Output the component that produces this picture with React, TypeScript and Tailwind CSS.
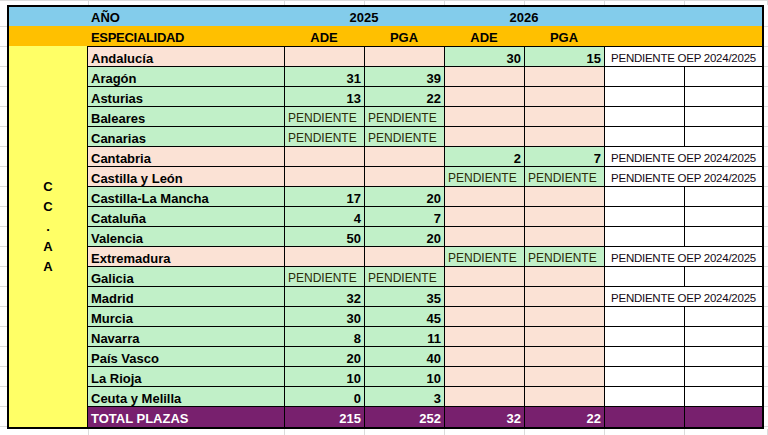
const font = { fontFamily: '"Liberation Sans", Arial, sans-serif' };

type Fill = 'g' | 'p' | 'w';

interface Row {
  name: string;
  nameFill: Fill;
  cells: [Fill, string][]; // ADE25, PGA25, ADE26, PGA26
  oep?: boolean;
}

const G: Fill = 'g';
const P: Fill = 'p';
const PEND = 'PENDIENTE';

const rows: Row[] = [
  { name: 'Andalucía', nameFill: P, cells: [[P, ''], [P, ''], [G, '30'], [G, '15']], oep: true },
  { name: 'Aragón', nameFill: G, cells: [[G, '31'], [G, '39'], [P, ''], [P, '']] },
  { name: 'Asturias', nameFill: G, cells: [[G, '13'], [G, '22'], [P, ''], [P, '']] },
  { name: 'Baleares', nameFill: G, cells: [[G, PEND], [G, PEND], [P, ''], [P, '']] },
  { name: 'Canarias', nameFill: G, cells: [[G, PEND], [G, PEND], [P, ''], [P, '']] },
  { name: 'Cantabria', nameFill: P, cells: [[P, ''], [P, ''], [G, '2'], [G, '7']], oep: true },
  { name: 'Castilla y León', nameFill: P, cells: [[P, ''], [P, ''], [G, PEND], [G, PEND]], oep: true },
  { name: 'Castilla-La Mancha', nameFill: G, cells: [[G, '17'], [G, '20'], [P, ''], [P, '']] },
  { name: 'Cataluña', nameFill: G, cells: [[G, '4'], [G, '7'], [P, ''], [P, '']] },
  { name: 'Valencia', nameFill: G, cells: [[G, '50'], [G, '20'], [P, ''], [P, '']] },
  { name: 'Extremadura', nameFill: P, cells: [[P, ''], [P, ''], [G, PEND], [G, PEND]], oep: true },
  { name: 'Galicia', nameFill: G, cells: [[G, PEND], [G, PEND], [P, ''], [P, '']] },
  { name: 'Madrid', nameFill: G, cells: [[G, '32'], [G, '35'], [P, ''], [P, '']], oep: true },
  { name: 'Murcia', nameFill: G, cells: [[G, '30'], [G, '45'], [P, ''], [P, '']] },
  { name: 'Navarra', nameFill: G, cells: [[G, '8'], [G, '11'], [P, ''], [P, '']] },
  { name: 'País Vasco', nameFill: G, cells: [[G, '20'], [G, '40'], [P, ''], [P, '']] },
  { name: 'La Rioja', nameFill: G, cells: [[G, '10'], [G, '10'], [P, ''], [P, '']] },
  { name: 'Ceuta y Melilla', nameFill: G, cells: [[G, '0'], [G, '3'], [P, ''], [P, '']] },
];

const fillClass = (f: Fill) =>
  f === 'g' ? 'bg-[#c1f0c8]' : f === 'p' ? 'bg-[#fbe2d5]' : 'bg-white';

function ValueCell({ fill, value }: { fill: Fill; value: string }) {
  if (value === PEND) {
    return (
      <div className={`${fillClass(fill)} border-l border-black pl-[3px] pt-[4px] text-[12px] leading-[15px] text-[#2a2a08] overflow-hidden whitespace-nowrap`}>
        {value}
      </div>
    );
  }
  return (
    <div className={`${fillClass(fill)} border-l border-black pr-[3px] pt-[4px] text-right text-[13px] font-bold leading-[15px] text-black`}>
      {value}
    </div>
  );
}

// faint spreadsheet gridlines outside the table
function GridStrip({ className }: { className: string }) {
  return (
    <div className={`flex ${className}`}>
      <div className="w-[89px] border-r border-[#dcdcdc]" />
      <div className="w-[196px] border-r border-[#dcdcdc]" />
      <div className="w-[80px] border-r border-[#dcdcdc]" />
      <div className="w-[80px] border-r border-[#dcdcdc]" />
      <div className="w-[80px] border-r border-[#dcdcdc]" />
      <div className="w-[80px] border-r border-[#dcdcdc]" />
      <div className="w-[80px] border-r border-[#dcdcdc]" />
      <div className="flex-1 border-r border-[#dcdcdc]" />
    </div>
  );
}

function SideStrip({ className }: { className: string }) {
  return (
    <div className={`flex flex-col ${className}`}>
      <div className="h-[22px] shrink-0 border-b border-[#dcdcdc]" />
      {Array.from({ length: 20 }).map((_, i) => (
        <div key={i} className="h-[20px] shrink-0 border-b border-[#dcdcdc]" />
      ))}
    </div>
  );
}

export default function App() {
  return (
    <div className="w-[768px] h-[435px] bg-white flex flex-col overflow-hidden" style={font}>
      <GridStrip className="h-[5px] shrink-0 border-t border-[#dcdcdc]" />

      <div className="flex shrink-0">
        <SideStrip className="w-[7px] h-[424px] overflow-hidden" />

        <div className="w-[757px] border-2 border-black flex flex-col">
          {/* year header */}
          <div className="grid grid-cols-[79px_196px_160px_160px_158px] h-[19px] bg-[#83cceb] text-[13px] font-bold leading-[15px] text-black">
            <div />
            <div className="pl-[3px] pt-[3px]">AÑO</div>
            <div className="pt-[3px] text-center">2025</div>
            <div className="pt-[3px] text-center">2026</div>
            <div />
          </div>

          {/* specialty header */}
          <div className="grid grid-cols-[79px_196px_80px_80px_80px_80px_158px] h-[20px] bg-[#ffc000] text-[13px] font-bold leading-[15px] text-black">
            <div />
            <div className="pl-[3px] pt-[4px] tracking-[-0.3px]">ESPECIALIDAD</div>
            <div className="pt-[4px] text-center">ADE</div>
            <div className="pt-[4px] text-center">PGA</div>
            <div className="pt-[4px] text-center">ADE</div>
            <div className="pt-[4px] text-center">PGA</div>
            <div />
          </div>

          <div className="flex">
            {/* CC.AA merged column */}
            <div className="w-[78px] bg-[#ffff66] flex flex-col">
              <div className="h-[361px] flex flex-col items-center justify-center text-[13px] font-bold leading-[20px] text-black">
                <span>C</span>
                <span>C</span>
                <span>.</span>
                <span>A</span>
                <span>A</span>
              </div>
              <div className="h-[20px]" />
            </div>

            <div className="w-[675px] border-l border-t border-black flex flex-col">
              {rows.map((r) => (
                <div key={r.name} className="grid grid-cols-[196px_80px_80px_80px_80px_80px_78px] h-[20px] border-b border-black">
                  <div className={`${fillClass(r.nameFill)} pl-[3px] pt-[4px] text-[13px] font-bold leading-[15px] text-black whitespace-nowrap`}>
                    {r.name}
                  </div>
                  {r.cells.map(([f, v], i) => (
                    <ValueCell key={i} fill={f} value={v} />
                  ))}
                  {r.oep ? (
                    <div className="col-span-2 bg-white border-l border-black pt-[4px] text-center text-[11.5px] leading-[15px] tracking-[-0.25px] text-[#140a14] whitespace-nowrap">
                      PENDIENTE OEP 2024/2025
                    </div>
                  ) : (
                    <>
                      <div className="bg-white border-l border-black" />
                      <div className="bg-white border-l border-black" />
                    </>
                  )}
                </div>
              ))}

              {/* totals */}
              <div className="grid grid-cols-[196px_80px_80px_80px_80px_80px_78px] h-[20px] bg-[#78206e] text-[13px] font-bold leading-[15px] text-white">
                <div className="pl-[3px] pt-[4px]">TOTAL PLAZAS</div>
                <div className="border-l border-black pr-[3px] pt-[4px] text-right">215</div>
                <div className="border-l border-black pr-[3px] pt-[4px] text-right">252</div>
                <div className="border-l border-black pr-[3px] pt-[4px] text-right">32</div>
                <div className="border-l border-black pr-[3px] pt-[4px] text-right">22</div>
                <div className="border-l border-black" />
                <div className="border-l border-black" />
              </div>
            </div>
          </div>
        </div>

        <SideStrip className="flex-1 h-[424px] overflow-hidden" />
      </div>

      <GridStrip className="flex-1" />
    </div>
  );
}
